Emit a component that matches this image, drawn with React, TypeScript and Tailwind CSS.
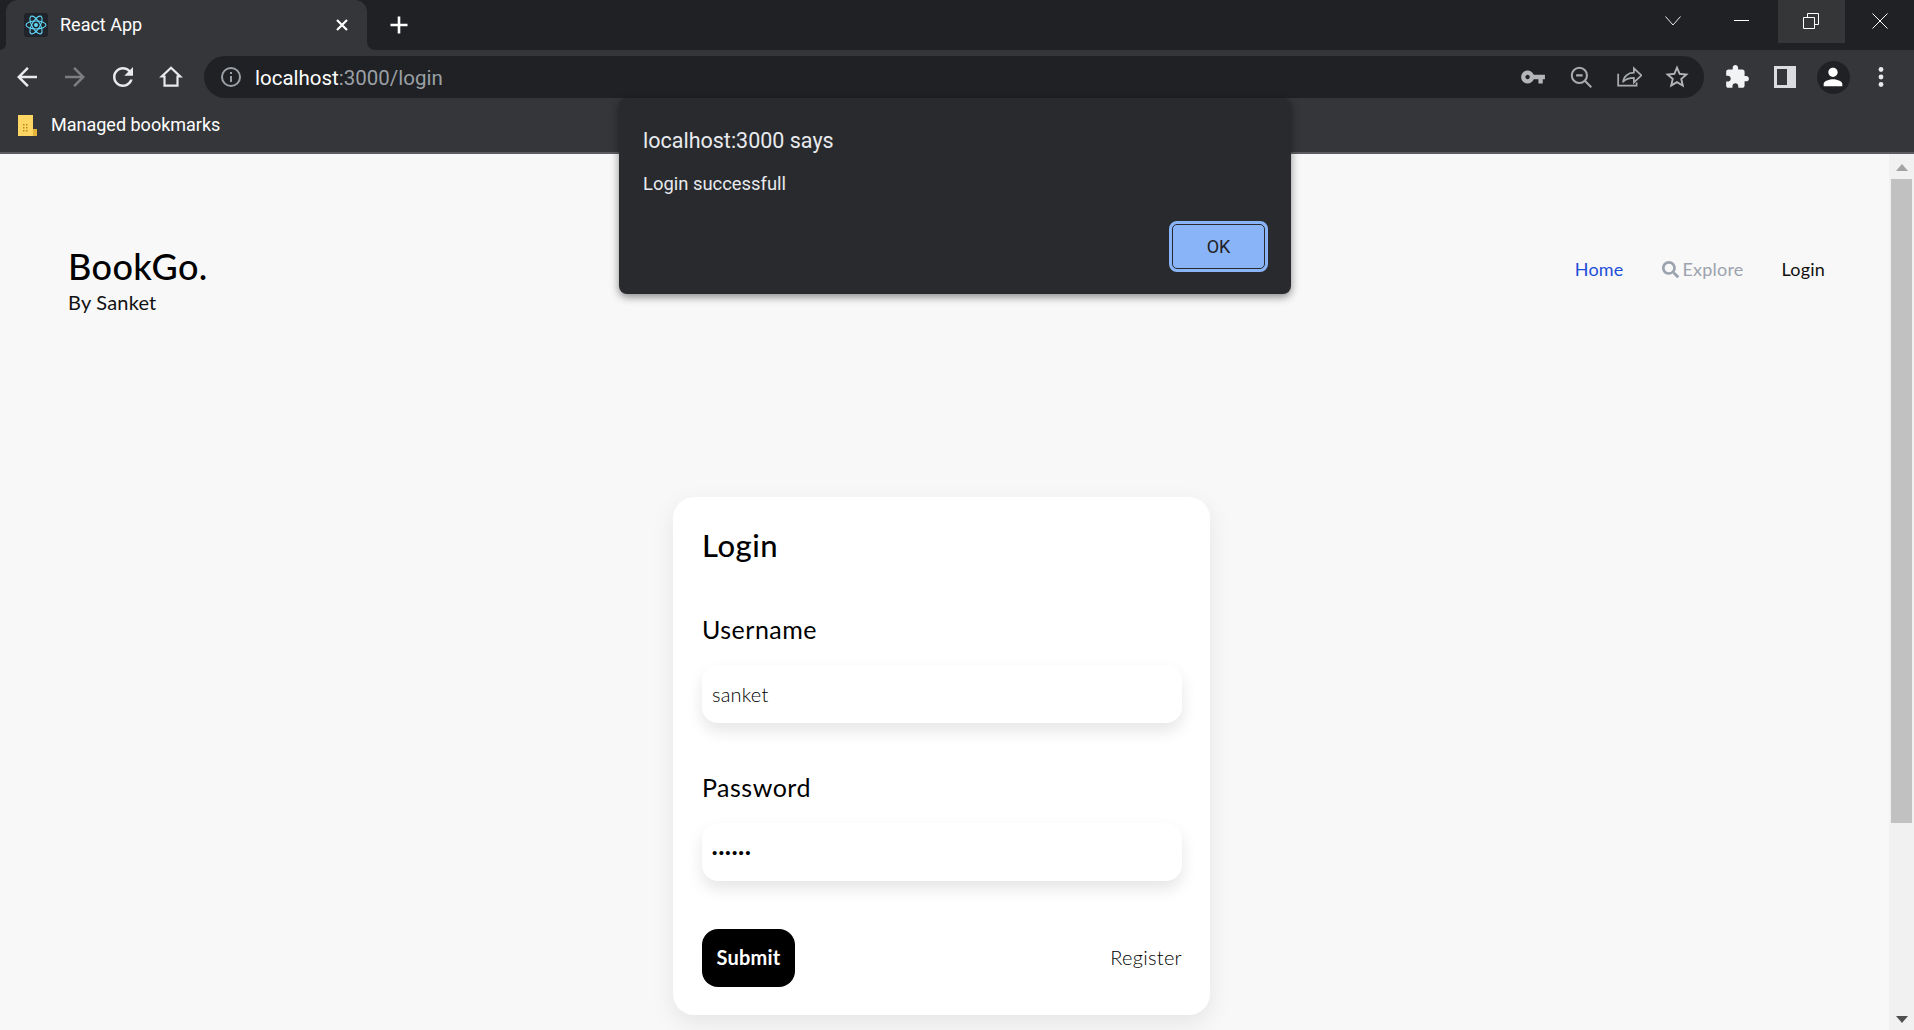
import { FaSearch } from 'react-icons/fa';

const ICON = {
    back: 'M20 11H7.83l5.59-5.59L12 4l-8 8 8 8 1.41-1.41L7.83 13H20v-2z',
    forward: 'M12 4l-1.41 1.41L16.17 11H4v2h12.17l-5.58 5.59L12 20l8-8z',
    reload: 'M17.65 6.35C16.2 4.9 14.21 4 12 4c-4.42 0-7.99 3.58-7.99 8s3.57 8 7.99 8c3.73 0 6.84-2.55 7.73-6h-2.08c-.82 2.33-3.04 4-5.65 4-3.31 0-6-2.69-6-6s2.69-6 6-6c1.66 0 3.14.69 4.22 1.78L13 11h7V4l-2.35 2.35z',
    key: 'M12.65 10C11.83 7.67 9.61 6 7 6c-3.31 0-6 2.69-6 6s2.69 6 6 6c2.61 0 4.83-1.67 5.65-4H17v4h4v-4h2v-4H12.65zM7 14c-1.1 0-2-.9-2-2s.9-2 2-2 2 .9 2 2-.9 2-2 2z',
    star: 'M22 9.24l-7.19-.62L12 2 9.19 8.63 2 9.24l5.46 4.73L5.82 21 12 17.27 18.18 21l-1.63-7.03L22 9.24zM12 15.4l-3.76 2.27 1-4.28-3.32-2.88 4.38-.38L12 6.1l1.71 4.04 4.38.38-3.32 2.88 1 4.28L12 15.4z',
    puzzle: 'M20.5 11H19V7c0-1.1-.9-2-2-2h-4V3.5C13 2.12 11.88 1 10.5 1S8 2.12 8 3.5V5H4c-1.1 0-1.99.9-1.99 2v3.8H3.5c1.49 0 2.7 1.21 2.7 2.7s-1.21 2.7-2.7 2.7H2V20c0 1.1.9 2 2 2h3.8v-1.5c0-1.49 1.21-2.7 2.7-2.7 1.49 0 2.7 1.21 2.7 2.7V22H17c1.1 0 2-.9 2-2v-4h1.5c1.38 0 2.5-1.12 2.5-2.5S21.88 11 20.5 11z',
    person: 'M12 12c2.21 0 4-1.79 4-4s-1.79-4-4-4-4 1.79-4 4 1.79 4 4 4zm0 2c-2.67 0-8 1.34-8 4v2h16v-2c0-2.66-5.33-4-8-4z',
};

const Solid = ({ d, size = 30, color = '#e8eaed' }: { d: string; size?: number; color?: string }) => (
    <svg width={size} height={size} viewBox="0 0 24 24" fill={color}>
        <path d={d} />
    </svg>
);

const Slot = ({ children }: { children: React.ReactNode }) => (
    <div className="w-12 h-full flex items-center justify-center shrink-0">{children}</div>
);

const ReactLogo = () => (
    <svg width="24" height="24" viewBox="0 0 24 24" fill="none" stroke="#61dafb" strokeWidth="1.1">
        <circle cx="12" cy="12" r="2" fill="#61dafb" stroke="none" />
        <ellipse cx="12" cy="12" rx="10" ry="4" />
        <ellipse cx="12" cy="12" rx="10" ry="4" transform="rotate(60 12 12)" />
        <ellipse cx="12" cy="12" rx="10" ry="4" transform="rotate(120 12 12)" />
    </svg>
);

const TitleBar = () => (
    <div className="h-[50px] bg-[#202124] flex shrink-0 text-[#e8eaed]">
        {/* Active tab */}
        <div className="relative ml-[6px] w-[361px] h-full bg-[#35363a] rounded-t-[12px] flex items-center pl-[18px]">
            <div className="w-6 h-6 bg-[#20232a] rounded-[3px] flex items-center justify-center">
                <ReactLogo />
            </div>
            <span className="ml-3 pb-[2px] text-[18px] font-['Roboto',sans-serif] text-white">React App</span>
            <svg className="absolute left-[329px] top-[18px]" width="14" height="14" viewBox="0 0 14 14" stroke="#fff" strokeWidth="2.2">
                <path d="M2 2l10 10M12 2L2 12" />
            </svg>
            {/* flare at the tab foot */}
            <div className="absolute -right-2 bottom-0 w-2 h-2 bg-[#35363a]">
                <div className="w-2 h-2 bg-[#202124] rounded-bl-[8px]" />
            </div>
            <div className="absolute -left-[6px] bottom-0 w-[6px] h-[6px] bg-[#35363a]">
                <div className="w-[6px] h-[6px] bg-[#202124] rounded-br-[6px]" />
            </div>
        </div>
        <div className="ml-[14px] w-[36px] flex items-center justify-center">
            <svg width="20" height="20" viewBox="0 0 20 20" stroke="#fff" strokeWidth="2.6">
                <path d="M10 1.5v17M1.5 10h17" />
            </svg>
        </div>
        <div className="flex-1" />
        <div className="w-[62px] h-[43px] pb-[2px] flex items-center justify-center">
            <svg width="16" height="10" viewBox="0 0 16 10" fill="none" stroke="#e8eaed" strokeWidth="1">
                <path d="M.5.5L8 9l7.5-8.5" />
            </svg>
        </div>
        <div className="w-[74px] h-[43px] pb-[2px] flex items-center justify-center">
            <div className="w-[15px] h-px bg-white" />
        </div>
        <div className="w-[67px] h-[43px] pb-[2px] pr-[1px] bg-[#353638] flex items-center justify-center">
            <svg width="16" height="16" viewBox="0 0 16 16" fill="none" stroke="#fff" strokeWidth="1">
                <path d="M.5 4.5h11v11H.5zM4.5 4.5V.5h11v11h-4" />
            </svg>
        </div>
        <div className="w-[69px] h-[43px] pb-[2px] flex items-center justify-center">
            <svg width="16" height="16" viewBox="0 0 16 16" stroke="#fff" strokeWidth="1">
                <path d="M.5.5l15 15M15.5.5l-15 15" />
            </svg>
        </div>
    </div>
);

const Toolbar = () => (
    <div className="h-[60px] bg-[#35363a] flex pt-[6px] pb-[12px] pl-[3px] pr-[9px] shrink-0">
        <Slot><Solid d={ICON.back} /></Slot>
        <Slot><Solid d={ICON.forward} color="#7b7d80" /></Slot>
        <Slot><Solid d={ICON.reload} /></Slot>
        <Slot>
            <svg width="26" height="26" viewBox="0 0 24 24" fill="none" stroke="#e8eaed" strokeWidth="2">
                <path d="M12 3.5L3.5 11.5H6V20h12v-8.5h2.500z" />
            </svg>
        </Slot>
        {/* Address bar */}
        <div className="ml-[9px] w-[1500px] h-[42px] bg-[#202124] rounded-full flex items-center pl-[15px] pr-[3px]">
            <svg width="24" height="24" viewBox="0 0 24 24" fill="none" stroke="#9aa0a6" strokeWidth="2">
                <circle cx="12" cy="12" r="9" />
                <path d="M12 11v6M12 7v2" />
            </svg>
            <div className="ml-[12px] pt-[2px] text-[20.5px] font-['Roboto',sans-serif] text-[#9aa0a6]">
                <span className="text-white">localhost</span>:3000/login
            </div>
            <div className="flex-1" />
            <div className="flex h-full">
                <Slot><Solid d={ICON.key} size={26} color="#b3b5b8" /></Slot>
                <Slot>
                    <svg width="26" height="26" viewBox="0 0 24 24" fill="none" stroke="#a8abae" strokeWidth="1.9">
                        <circle cx="10.5" cy="10.5" r="7" />
                        <path d="M7.500 10.500h6M15.500 15.500l6 6" />
                    </svg>
                </Slot>
                <Slot>
                    <svg width="26" height="26" viewBox="0 0 24 24" fill="none" stroke="#a8abae" strokeWidth="1.6">
                        <path d="M2 9v11h17v-3" />
                        <path d="M6.500 17c.5-5.500 4.500-9 10-9V4l7 6.500-7 6.500v-4.200c-4 0-7.500 1-10 3.700z" />
                    </svg>
                </Slot>
                <Slot><Solid d={ICON.star} size={28} color="#b3b5b8" /></Slot>
            </div>
        </div>
        <div className="ml-[9px] flex h-[42px]">
            <Slot><Solid d={ICON.puzzle} size={26} color="#f1f3f4" /></Slot>
            <Slot>
                <svg width="24" height="24" viewBox="0 0 24 24" fill="#dadce0">
                    <path fillRule="evenodd" d="M1 1h22v22H1zM4 4v16h10V4z" />
                </svg>
            </Slot>
            <Slot>
                <div className="w-[33px] h-[33px] rounded-full bg-[#202124] flex items-center justify-center">
                    <Solid d={ICON.person} size={28} color="#ffffff" />
                </div>
            </Slot>
            <Slot>
                <svg width="8" height="22" viewBox="0 0 8 22" fill="#e8eaed">
                    <circle cx="4" cy="3.500" r="2.400" />
                    <circle cx="4" cy="11" r="2.400" />
                    <circle cx="4" cy="18.500" r="2.400" />
                </svg>
            </Slot>
        </div>
    </div>
);

const BookmarksBar = () => (
    <div className="h-[29px] bg-[#35363a] border-b-2 border-[#5c5d60] flex items-center pl-[18px] pb-[13px] shrink-0 box-content">
        <svg width="19" height="22" viewBox="0 0 19 22">
            <path d="M0 1h15v14h4v7H0z" fill="#fdd663" />
            <path d="M15 15h4v7h-4z" fill="#e5b53a" />
            <path d="M5 10h1.500v1.500H5zM8 10h1.500v1.500H8zM5 13h1.500v1.500H5zM8 13h1.500v1.500H8zM5 16h1.500v1.500H5zM8 16h1.500v1.500H8z" fill="#b58a1b" />
        </svg>
        <span className="ml-[14px] text-[18px] font-['Roboto',sans-serif] text-white">Managed bookmarks</span>
    </div>
);

const Scrollbar = () => (
    <div className="w-[25px] bg-[#f1f1f1] flex flex-col items-center shrink-0">
        <div className="h-[25px] w-full flex items-center justify-center pt-[2px]">
            <svg width="12" height="7" viewBox="0 0 12 7" fill="#a3a3a3"><path d="M6 0l6 7H0z" /></svg>
        </div>
        <div className="w-[21px] h-[644px] bg-[#c1c1c1]" />
        <div className="flex-1" />
        <div className="h-[25px] w-full flex items-center justify-center pt-[4px]">
            <svg width="12" height="7" viewBox="0 0 12 7" fill="#505050"><path d="M0 0h12L6 7z" /></svg>
        </div>
    </div>
);

const Header = () => (
    <div className="flex justify-between pl-[68px] pr-[64px] pt-[90px]">
        <div>
            <div className="text-[36px] leading-[44px] font-medium text-black tracking-[0.4px]">BookGo.</div>
            <div className="text-[20px] leading-[28px] text-[#111] tracking-[0.2px]">By Sanket</div>
        </div>
        <nav className="self-start mt-[11px] flex items-center gap-[38px] text-[18px] leading-[28px] tracking-[0.2px]">
            <a className="text-[#1d4ed8]">Home</a>
            <a className="flex items-center gap-[4px] text-[#9ca3af]"><FaSearch size={17} /> Explore</a>
            <a className="text-[#111]">Login</a>
        </nav>
    </div>
);

const Field = ({ label, type, value, className, inputClass }: { label: string; type: string; value: string; className: string; inputClass: string }) => (
    <div className={className}>
        <label className="block text-[25px] leading-[30px] text-black tracking-[0.5px]">{label}</label>
        <input
            type={type}
            defaultValue={value}
            className={`mt-[21px] block w-full h-[58px] px-[10px] bg-white rounded-[16px] outline-none shadow-[0_8px_16px_rgba(0,0,0,0.1)] ${inputClass}`}
        />
    </div>
);

const LoginCard = () => (
    <div className="ml-[673px] mt-[181px] w-[537px] bg-white rounded-[21px] pt-[30px] pb-[28px] pl-[29px] pr-[28px] shadow-[0_8px_24px_rgba(0,0,0,0.08)]">
        <h2 className="text-[31px] leading-[36px] font-medium text-black tracking-[0.5px]">Login</h2>
        <Field className="mt-[51px]" inputClass="text-[20px] font-light text-black tracking-[0.2px]" label="Username" type="text" value="sanket" />
        <Field className="mt-[49px]" inputClass="text-[15px] tracking-[1.4px] font-['Liberation_Sans',sans-serif] text-black" label="Password" type="password" value="sanket" />
        <div className="mt-[48px] flex items-center justify-between">
            <button className="w-[93px] h-[58px] pb-[2px] bg-black text-white font-bold text-[20px] rounded-[16px] tracking-[0.2px]">Submit</button>
            <a className="pb-[2px] text-[20px] font-light text-black tracking-[0.3px]">Register</a>
        </div>
    </div>
);

const AlertDialog = () => (
    <div className="absolute left-[619px] top-[98px] w-[672px] h-[196px] bg-[#292a2d] rounded-[8px] shadow-[0_3px_8px_rgba(0,0,0,0.45)] pt-[28px] pl-[24px] pr-[23px] font-['Roboto',sans-serif] flex flex-col">
        <div className="text-[21.5px] leading-[30px] text-[#e8eaed]">localhost:3000 says</div>
        <div className="mt-[16px] text-[18.4px] leading-[24px] text-[#e8eaed]">Login successfull</div>
        <div className="mt-[25px] flex justify-end">
            <button className="w-[99px] h-[51px] bg-[#8ab4f8] rounded-[8px] border-[3px] border-[#8ab4f8] text-[18px] text-[#202124] outline outline-1 -outline-offset-4 outline-[#292a2d]">OK</button>
        </div>
    </div>
);

export default function App() {
    return (
        <div className="relative h-screen flex flex-col overflow-hidden bg-[#f8f8f8] font-['Lato',sans-serif]">
            <TitleBar />
            <Toolbar />
            <BookmarksBar />
            <div className="flex flex-1 min-h-0">
                <main className="flex-1 min-w-0">
                    <Header />
                    <LoginCard />
                </main>
                <Scrollbar />
            </div>
            <AlertDialog />
        </div>
    );
}
